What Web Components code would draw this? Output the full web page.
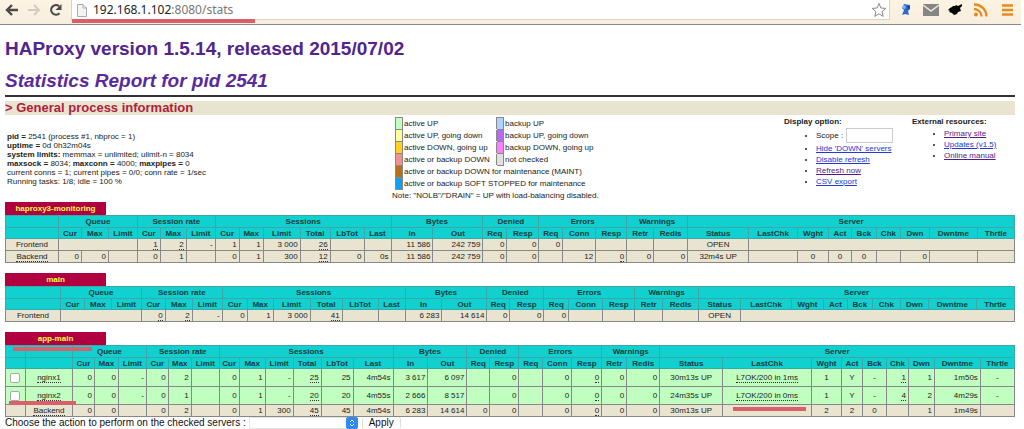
<!DOCTYPE html>
<html lang="en">
<head>
<meta charset="utf-8">
<title>Statistics Report for HAProxy</title>
<style>
html{background:#fff}
body{margin:0;font-family:"Liberation Sans",Arial,sans-serif;font-size:8px;line-height:9px;color:#222;overflow:hidden}
main{margin:0 9px 0 5px}
h1,h2,h3{margin:0;font-weight:bold}
h1{font-size:19px;line-height:24px;padding-top:12px;color:#51248f}
h2{font-size:19px;line-height:24px;margin-top:8px;padding-bottom:2px;font-style:italic;color:#5a2a9c;border-bottom:2px solid #333}
h3{font-size:13px;line-height:14px;margin-top:4px;background:#e8e4d0}
h3 a{color:#b0203c;text-decoration:none}
</style>
</head>
<body>
<browser-bar host="192.168.1.102" path=":8080/stats"></browser-bar>
<main>
<h1>HAProxy version 1.5.14, released 2015/07/02</h1>
<h2>Statistics Report for pid 2541</h2>
<h3><a href="#">&gt; General process information</a></h3>
<process-info>
  <div slot="process"><b>pid = </b>2541 (process #1, nbproc = 1)<br>
  <b>uptime = </b>0d 0h32m04s<br>
  <b>system limits:</b> memmax = unlimited; ulimit-n = 8034<br>
  <b>maxsock = </b>8034; <b>maxconn = </b>4000; <b>maxpipes = </b>0<br>
  current conns = 1; current pipes = 0/0; conn rate = 1/sec<br>
  Running tasks: 1/8; idle = 100 %</div>
  <state-legend slot="legend"></state-legend>
  <link-list slot="display" heading="Display option:" kind="display"></link-list>
  <link-list slot="external" heading="External resources:" kind="external"></link-list>
</process-info>
<proxy-table name="haproxy3-monitoring"></proxy-table>
<proxy-table name="main"></proxy-table>
<proxy-table name="app-main"></proxy-table>
<server-action></server-action>
</main>
<script>
function shadow(el, html) {
  const t = document.createElement('template');
  t.innerHTML = html;
  el.attachShadow({mode: 'open'}).append(t.content.cloneNode(true));
}

customElements.define('browser-bar', class extends HTMLElement {
  connectedCallback() {
    shadow(this, `<style>
:host{display:flex;align-items:flex-start;box-sizing:border-box;height:25px;margin-right:3px;background:linear-gradient(#fdf3e2,#f7eedf);border-bottom:1px solid #8c8a86}
nav{display:flex;gap:6px;flex:none;width:71px;box-sizing:border-box;padding:2px 0 0 4px}
button{border:0;padding:0;margin:0;background:none;display:block;height:16px}
svg{display:block}
.box{flex:1;display:flex;align-items:center;position:relative;height:20px;background:#fff;border:1px solid #d8d2c8;border-top:0;box-sizing:border-box;padding:0 2px 0 5px}
.box label{flex:none;margin-right:6px}
.url{flex:1;font:12px/18px "Noto Sans",sans-serif;color:#777;white-space:nowrap}
.url b{font-weight:normal;color:#222}
.mark{position:absolute;left:0;top:19px;width:183px;height:4px;background:#d9606a}
.ext{display:flex;gap:8px;flex:none;padding:2px 5px 0 8px}
</style>
<nav>
<button aria-label="Back"><svg width="16" height="16"><path d="M14 8H3M8 3L3 8l5 5" fill="none" stroke="#4a4a4a" stroke-width="2.4"/></svg></button>
<button aria-label="Forward"><svg width="16" height="16"><path d="M2 8h11M8 3l5 5-5 5" fill="none" stroke="#d2cbc0" stroke-width="2"/></svg></button>
<button aria-label="Reload"><svg width="16" height="16"><path d="M11.5 11.2A4.8 4.8 0 1 1 11 4.2" fill="none" stroke="#4a4a4a" stroke-width="2.2"/><path d="M13.5 2v6H7.500z" fill="#4a4a4a"/></svg></button>
</nav>
<div class="box"><label aria-label="Page"><svg width="10" height="14"><path d="M.5 1.500h5.500l3.500 3.500v8.500h-9zM6 1.500V5h3.500" fill="#f4f4f4" stroke="#aaa"/></svg></label>
<span class="url"><b></b><span></span></span>
<button aria-label="Bookmark"><svg width="16" height="16"><path d="M8 1.500l1.900 4.500 4.900.4-3.700 3.200 1.100 4.800L8 11.800l-4.200 2.600 1.100-4.800L1.200 6.400 6.100 6z" fill="#fff" stroke="#888"/></svg></button>
<i class="mark"></i></div>
<div class="ext">
<button aria-label="Extension"><svg width="16" height="16"><path d="M6 2l6 1v4l-2 2 1 4-4-1-3 1 2-5-2-2z" fill="#2d69cc"/><path d="M5 3l3 1-1 3-3-1z" fill="#80b9f4"/><path d="M9 4l3 0-1 4z" fill="#163f93"/></svg></button>
<button aria-label="Mail"><svg width="18" height="16"><path d="M1 2h16v12H1z" fill="#858585"/><path d="M1 3l8 6 8-6" fill="none" stroke="#f5ead8" stroke-width="1.500"/></svg></button>
<button aria-label="Clipper"><svg width="16" height="16"><path d="M2 6l2-1 1-1 2 0 1-1 2 1 4-2 0 2-2 2 1 3-3 1-1 2-3 1-2-2-3-1 1-1-2-1z" fill="#050505"/></svg></button>
<button aria-label="Feed"><svg width="18" height="16"><circle cx="4" cy="12.500" r="2" fill="#e58a1f"/><path d="M2 7a7.500 7.500 0 0 1 7.500 7.500M2 2.500A12 12 0 0 1 14.500 14.500" fill="none" stroke="#e58a1f" stroke-width="2.300"/></svg></button>
<button aria-label="Menu"><svg width="18" height="16"><path d="M4 3.500h11M4 8h11M4 12.500h11" stroke="#e58a1f" stroke-width="2.600"/></svg></button>
</div>`);
    this.shadowRoot.querySelector('.url b').textContent = this.getAttribute('host');
    this.shadowRoot.querySelector('.url span').textContent = this.getAttribute('path');
  }
});

customElements.define('process-info', class extends HTMLElement {
  connectedCallback() {
    shadow(this, `<style>
:host{display:grid;grid-template-columns:390fr 389fr 128fr 103fr;padding-top:2px;min-height:87px;box-sizing:border-box}
div{min-width:0;white-space:nowrap}
.process{padding:15px 0 0 2px}
</style><div class="process"><slot name="process"></slot></div><div><slot name="legend"></slot></div><div><slot name="display"></slot></div><div><slot name="external"></slot></div>`);
  }
});

customElements.define('state-legend', class extends HTMLElement {
  connectedCallback() {
    const left = [['#c0ffc0','active UP'],['#ffffa0','active UP, going down'],['#ffd020','active DOWN, going up'],['#f09090','active or backup DOWN'],['#b87018','active or backup DOWN for maintenance (MAINT)'],['#10a0f0','active or backup SOFT STOPPED for maintenance']];
    const right = [['#b0d0ff','backup UP'],['#b868f4','backup UP, going down'],['#ff80ff','backup DOWN, going up'],['#e0e0e0','not checked']];
    shadow(this, `<style>
:host{display:block}
table{border-collapse:collapse;line-height:11px}
td{padding:0 0 0 1px;height:11px;border-bottom:1px solid transparent;white-space:nowrap}
td.k{width:6px;padding:0;border:1px solid #888}
td.n{width:92px}
p{margin:1px 0 0 -3px}
</style><table>${left.map((l, i) => {
      const r = right[i];
      return `<tr><td class="k" style="background:${l[0]}"></td><td class="n"${r ? '' : ' colspan="3"'}>${l[1]}</td>${r ? `<td class="k" style="background:${r[0]}"></td><td>${r[1]}</td>` : ''}</tr>`;
    }).join('')}</table><p>Note: "NOLB"/"DRAIN" = UP with load-balancing disabled.</p>`);
  }
});

customElements.define('link-list', class extends HTMLElement {
  connectedCallback() {
    const items = {
      display: ['<label>Scope : <input type="text"></label>', '<a href="#">Hide \'DOWN\' servers</a>', '<a href="#">Disable refresh</a>', '<a href="#" class="v">Refresh now</a>', '<a href="#">CSV export</a>'],
      external: ['<a href="#" class="v">Primary site</a>', '<a href="#">Updates (v1.5)</a>', '<a href="#" class="v">Online manual</a>']
    }[this.getAttribute('kind')];
    shadow(this, `<style>
:host{display:block}
ul{margin:0;padding:2px 0 0 32px}
li{line-height:11px}
label{display:flex;align-items:center;gap:3px}
input{width:47px;height:15px;box-sizing:border-box;border:1px solid #ccc;padding:0;font:inherit;background:#fff}
a{color:#2238d8}
a.v{color:#551a8b}
b{display:block;line-height:9px}
</style><b>${this.getAttribute('heading')}</b><ul>${items.map(i => `<li>${i}</li>`).join('')}</ul>`);
  }
});

/* Row cells: a plain value, "_x" for a value with a tooltip, or [value, colspan]. */
const PROXIES = {
  'haproxy3-monitoring': {
    cols: [53,23,27,29,23,26,29,24,24,37,30,34,27,42,50,24,32,24,33,31,27,34,61,49,31,23,25,24,29,48,37],
    rows: [
      ['Frontend',['',3],'_1','_2','-','1','1','3 000','_26','','','11 586','242 759','0','0','0','','','','','OPEN',['',8]],
      ['_Backend','0','0','','0','1','','0','1','300','_12','0','0s','11 586','242 759','0','0','','12','_0','0','0','32m4s UP','','0','0','0','','0','','']
    ]
  },
  'main': {
    cols: [55,24,27,30,24,27,30,25,26,37,32,36,27,37,45,23,34,25,34,32,28,36,42,51,32,24,25,28,28,48,38],
    rows: [['Frontend',['',3],'_0','_2','-','0','1','3 000','_41','','','6 283','14 614','0','0','0','','','','','OPEN',['',8]]]
  },
  'app-main': {
    checks: true,
    cols: [20,47,22,24,28,22,23,28,20,26,28,28,32,40,35,39,23,29,24,29,30,25,33,63,89,30,21,24,22,26,46,34],
    rows: [
      ['_nginx1','0','0','-','0','2','','0','1','-','_25','25','4m54s','3 617','6 097','','0','','0','_0','0','0','30m13s UP','_L7OK/200 in 1ms','1','Y','-','_1','1','1m50s','-'],
      ['_nginx2','0','0','-','0','1','','0','1','-','_20','20','4m55s','2 666','8 517','','0','','0','_0','0','0','24m35s UP','_L7OK/200 in 0ms','1','Y','-','_4','2','4m29s','-'],
      ['_Backend','0','0','','0','2','','0','1','300','_45','45','4m54s','6 283','14 614','0','0','','0','_0','0','0','30m13s UP','','2','2','0','','1','1m49s','']
    ]
  }
};
const GROUPS = [['Queue',3],['Session rate',3],['Sessions',6],['Bytes',2],['Denied',2],['Errors',3],['Warnings',2],['Server',9]];
const HEADS = 'Cur Max Limit Cur Max Limit Cur Max Limit Total LbTot Last In Out Req Resp Req Conn Resp Retr Redis Status LastChk Wght Act Bck Chk Dwn Dwntme Thrtle'.split(' ');

customElements.define('proxy-table', class extends HTMLElement {
  connectedCallback() {
    const name = this.getAttribute('name');
    const p = PROXIES[name];
    const total = p.cols.reduce((a, b) => a + b, 0);
    const cell = (v, col, last) => {
      let span = 1;
      if (Array.isArray(v)) [v, span] = v;
      const centred = col === 0 || (col >= 22 && col <= 26) || v === '-' && col === 30;
      const tip = v[0] === '_';
      const text = tip ? `<u>${v.slice(1)}</u>` : v;
      const mark = v === '_nginx2' ? '<i class="under-name"></i>' : (p.checks && last && col === 23 ? '<i class="over-check"></i>' : '');
      return [`<td${span > 1 ? ` colspan="${span}"` : ''}${centred ? ' class="c"' : ''}>${text}${mark}</td>`, span];
    };
    const body = p.rows.map((r, ri) => {
      const last = ri === p.rows.length - 1;
      let col = 0;
      const cells = r.map(v => { const [h, s] = cell(v, col, last); col += s; return h; });
      const server = p.checks && !last;
      const label = r[0].slice(1);
      const check = server ? `<td class="c"><input type="checkbox" aria-label="${label}"></td>` : '';
      if (p.checks && last) cells[0] = `<td></td>${cells[0]}`;
      return `<tr class="${server ? 'server' : ''}">${check}${cells.join('')}</tr>`;
    }).join('');
    const lead = p.checks ? '<th></th><th></th>' : '<th></th>';
    shadow(this, `<style>
:host{display:block;margin-bottom:10px}
h4{position:relative;box-sizing:border-box;width:10%;margin:0;font-size:8px;line-height:12px;height:13px;padding-top:1px;text-align:center;color:#ffff40;background:#b00040;white-space:nowrap}
table{width:100%;table-layout:fixed;border-collapse:collapse;line-height:9px}
th,td{border:1px solid #888;padding:0 2px;white-space:nowrap}
th{height:10px;background:#10d0d0;color:#123c3c;padding:0;border-color:#3aa8a8}
.groups th{height:11px}
td{background:#e8e4d0;text-align:right;height:11px}
td.c{text-align:center;position:relative;padding:0}
.server td{background:#c0ffc0;height:17px}
u{display:inline-block;line-height:8px;text-decoration:none;border-bottom:1px dotted #333}
input{appearance:none;display:block;width:10px;height:10px;box-sizing:border-box;margin:0 auto;border:1px solid #aaa;border-radius:2px;background:#fff}
i{position:absolute;height:4px;background:#d9606a;z-index:1}
.under-title{left:8px;top:15px;width:79px}
.under-name{left:-17px;top:14px;width:67px}
.over-check{left:10px;top:2px;width:73px}
</style><h4>${name}${p.checks ? '<i class="under-title"></i>' : ''}</h4>
<table><colgroup>${p.cols.map(w => `<col style="width:calc(100% * ${w} / ${total})">`).join('')}</colgroup>
<thead><tr class="groups">${lead}${GROUPS.map(g => `<th colspan="${g[1]}">${g[0]}</th>`).join('')}</tr>
<tr>${lead}${HEADS.map(h => `<th>${h}</th>`).join('')}</tr></thead><tbody>${body}</tbody></table>`);
  }
});

customElements.define('server-action', class extends HTMLElement {
  connectedCallback() {
    shadow(this, `<style>
:host{display:flex;align-items:center;margin-top:-10px;height:12px;font-size:10px;line-height:12px;color:#111}
label{display:flex;align-items:center;gap:3px;white-space:nowrap}
select{appearance:none;width:97px;height:12px;border:1px solid #e4e4e4;border-right:0;background:#fff;padding:0}
svg{display:block;margin-left:-3px}
button{height:12px;margin-left:4px;padding:0 6px;border:1px solid #ddd;border-width:0 1px;border-radius:3px;background:#fff;font:inherit;color:#111}
</style><label>Choose the action to perform on the checked servers : <select><option></option></select>
<svg width="12" height="12"><rect width="12" height="12" rx="2" fill="#2f8bf2"/><path d="M4 5l2-2 2 2M4 7l2 2 2-2" fill="none" stroke="#fff"/></svg></label>
<button type="button">Apply</button>`);
  }
});
</script>
</body>
</html>
